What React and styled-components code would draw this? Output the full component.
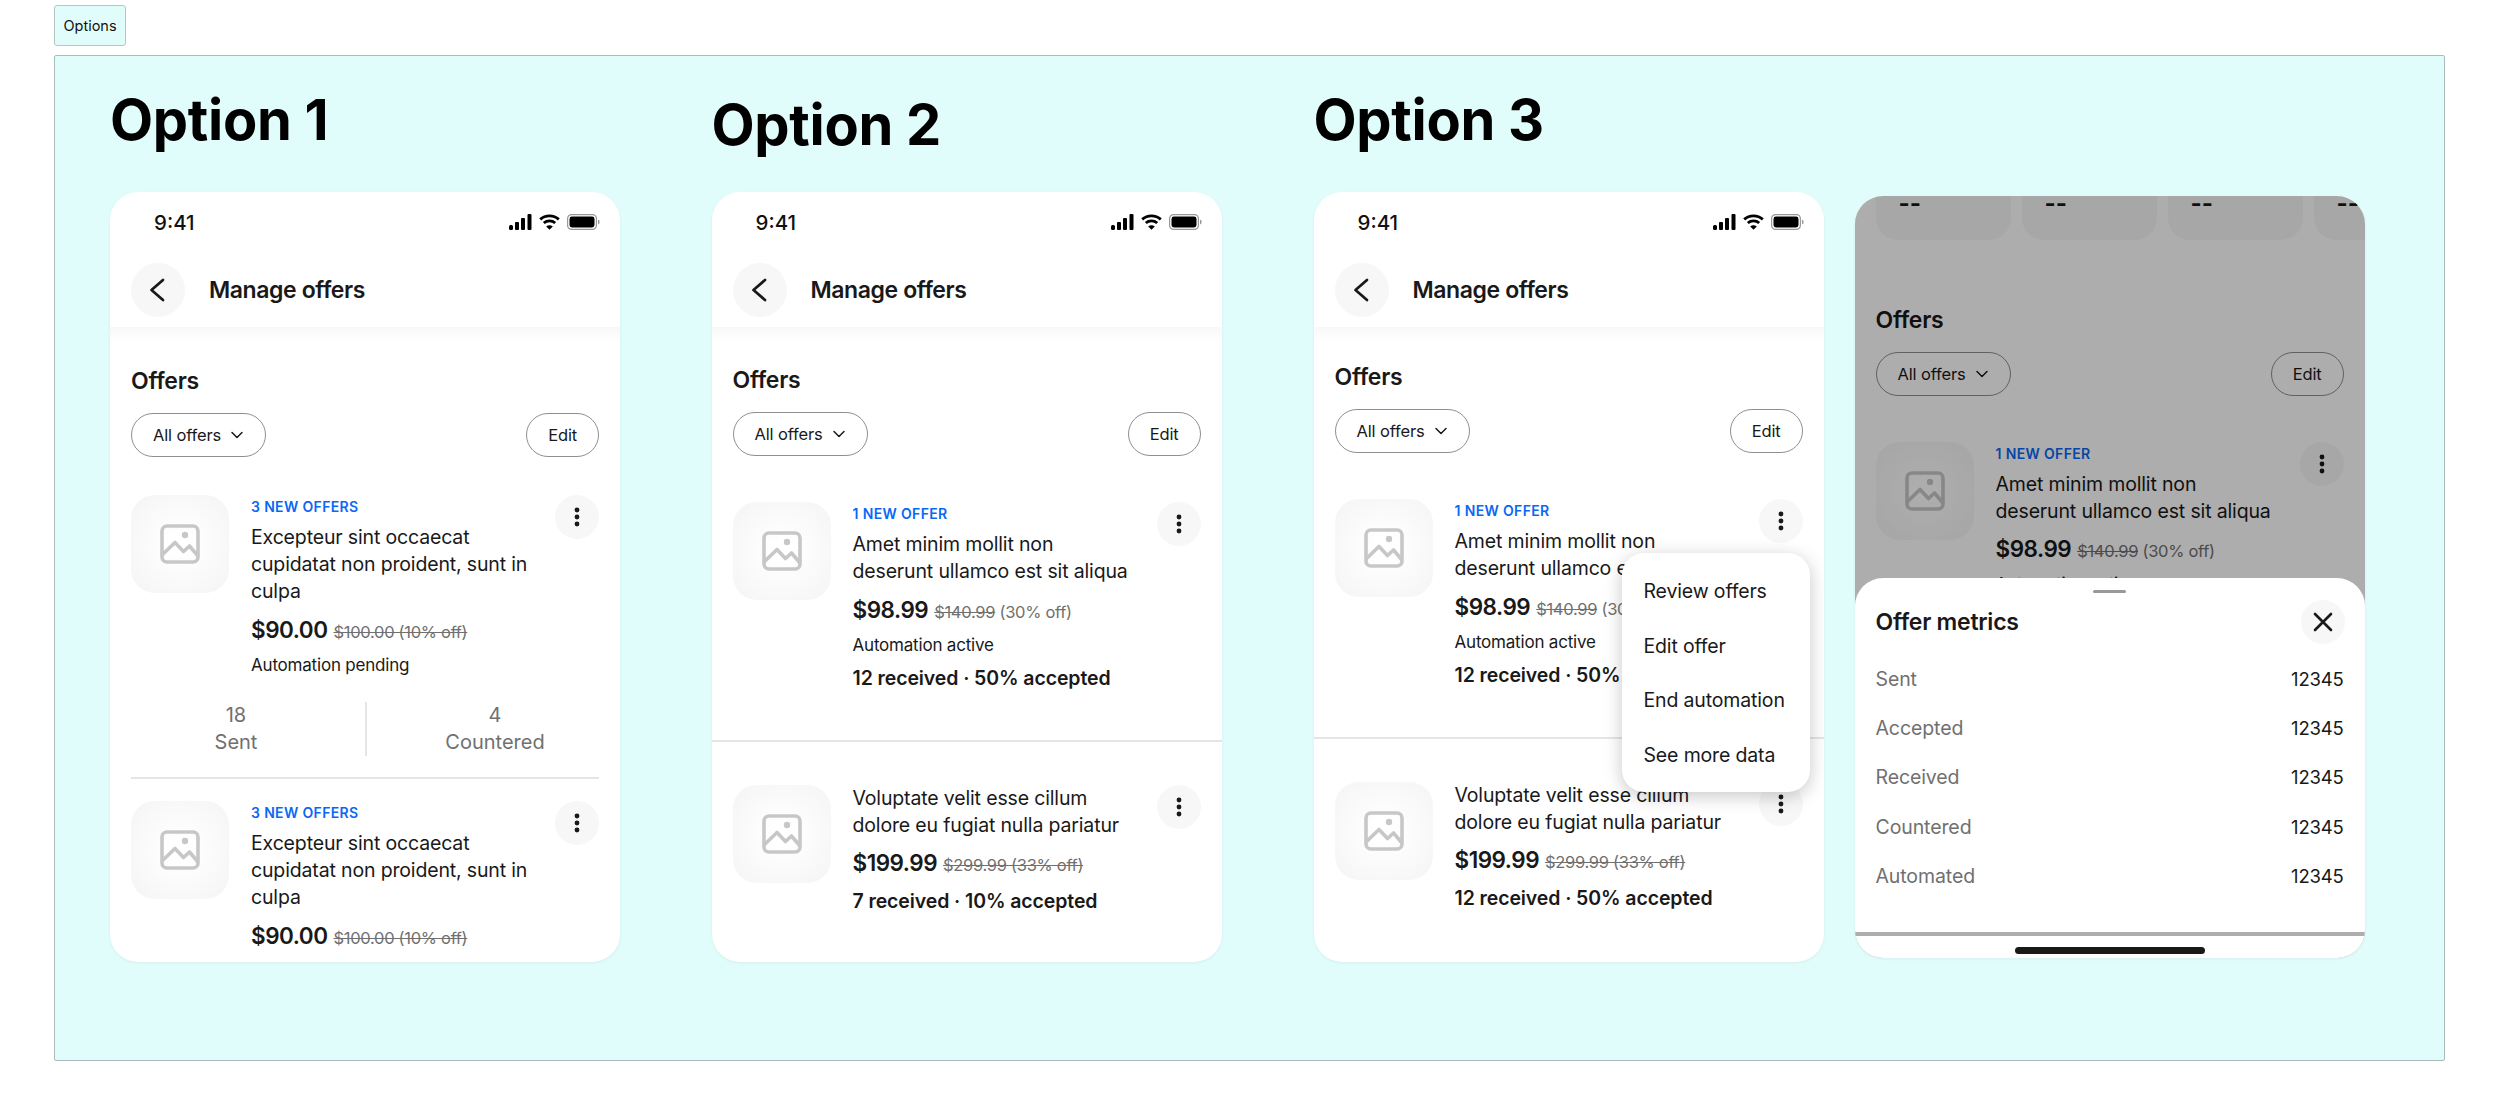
import React from 'react';
import styled, { createGlobalStyle } from 'styled-components';

const GlobalStyle = createGlobalStyle`
    html, body {
        margin: 0;
        padding: 0;
        background: #fff;
    }
    * {
        box-sizing: border-box;
    }
    body {
        font-family: Inter, 'Liberation Sans', sans-serif;
        color: #191919;
    }
`;

const Page = styled.div`
    width: 2500px;
    height: 1116px;
    padding: 5px 0 0 54px;
    overflow: hidden;
`;

const TabButton = styled.button`
    display: block;
    width: 72px;
    height: 41px;
    padding: 0;
    background: #e1fdfb;
    border: 1.5px solid #b4c6c6;
    border-radius: 3px;
    font-family: Inter, sans-serif;
    font-size: 14.5px;
    color: #111;
`;

const Panel = styled.div`
    display: flex;
    width: 2391px;
    height: 1006px;
    margin-top: 9px;
    padding-left: 55px;
    background: #e1fdfb;
    border: 1px solid #a9bcbc;
    border-radius: 2px;
`;

const Column = styled.div`
    display: flex;
    flex-direction: column;
    width: 510px;
    margin-right: ${p => p.$gap}px;
`;

const Heading = styled.h2`
    height: 136px;
    margin: 0;
    padding-top: ${p => p.$top}px;
    font-size: 56px;
    line-height: 66px;
    font-weight: 700;
    letter-spacing: -0.3px;
    color: #000;
`;

const SideColumn = styled.div`
    padding-top: 140px;
`;

const Phone = styled.div`
    position: relative;
    display: flex;
    flex-direction: column;
    width: 510px;
    height: ${p => p.$height}px;
    background: #fff;
    border-radius: 28px;
    overflow: hidden;
    box-shadow: 0 1px 3px rgba(0, 0, 0, 0.06);
`;

const StatusBar = styled.div`
    display: flex;
    flex: none;
    align-items: center;
    justify-content: space-between;
    height: 60px;
    padding: 0 20px 0 44px;
`;

const StatusTime = styled.span`
    font-size: 20.5px;
    font-weight: 500;
    color: #111;
`;

const NavBar = styled.div`
    display: flex;
    flex: none;
    align-items: center;
    gap: 24px;
    height: 75px;
    padding: 0 21px;
`;

const CircleButton = styled.div`
    display: flex;
    flex: none;
    align-items: center;
    justify-content: center;
    width: ${p => p.$size}px;
    height: ${p => p.$size}px;
    background: #f7f7f7;
    border-radius: 50%;
`;

const NavTitle = styled.div`
    font-size: 23px;
    font-weight: 600;
    letter-spacing: -0.4px;
    color: #191919;
`;

const NavShadow = styled.div`
    flex: none;
    height: 14px;
    background: linear-gradient(#f8f8f8, #fff);
`;

const Section = styled.div`
    flex: none;
    padding: ${p => p.$top}px 21px 0;
`;

const SectionTitle = styled.div`
    font-size: 23px;
    line-height: 28px;
    font-weight: 600;
    letter-spacing: -0.25px;
`;

const FilterRow = styled.div`
    display: flex;
    justify-content: space-between;
    margin-top: 18px;
`;

const Pill = styled.div`
    display: flex;
    align-items: center;
    gap: 9px;
    height: 44px;
    padding: 0 21px;
    border: 1.5px solid #8f8f8f;
    border-radius: 22px;
    font-size: 16.5px;
    letter-spacing: -0.15px;
`;

const StatCards = styled.div`
    display: flex;
    flex: none;
    gap: 11px;
    padding-left: 21px;
`;

const StatCard = styled.div`
    flex: none;
    width: 135px;
    height: 44px;
    padding-left: 23px;
    background: #f7f7f7;
    border-radius: 0 0 22px 22px;
    font-size: 24px;
    line-height: 16px;
    font-weight: 700;
`;

const OfferList = styled.div`
    flex: none;
    padding-top: ${p => p.$top}px;
`;

const OfferRow = styled.div`
    display: flex;
    gap: 22px;
    padding: 0 21px;
`;

const Thumb = styled.div`
    display: flex;
    flex: none;
    align-items: center;
    justify-content: center;
    width: 98px;
    height: 98px;
    border-radius: 24px;
    background: radial-gradient(circle, #fff 15%, #f6f6f6 85%);
`;

const OfferBody = styled.div`
    flex: 1;
    min-width: 0;
`;

const Badge = styled.div`
    height: 24px;
    margin-bottom: 5px;
    font-size: 14px;
    line-height: 24px;
    font-weight: 600;
    letter-spacing: 0.35px;
    color: #0968f6;
`;

const OfferTitle = styled.div`
    font-size: 19.5px;
    line-height: 27px;
    letter-spacing: -0.15px;
    white-space: nowrap;
`;

const PriceLine = styled.div`
    display: flex;
    align-items: baseline;
    gap: 6px;
    height: 34px;
    margin-top: 7.5px;
    line-height: 34px;
`;

const Price = styled.span`
    font-size: 22.5px;
    font-weight: 600;
    letter-spacing: -0.5px;
`;

const WasPrice = styled.span`
    font-size: 16.5px;
    letter-spacing: -0.3px;
    color: #707070;
`;

const Struck = styled.s`
    color: #707070;
`;

const AutoStatus = styled.div`
    margin-top: 6px;
    font-size: 17px;
    line-height: 24px;
    letter-spacing: -0.2px;
`;

const Summary = styled.div`
    margin-top: 7px;
    font-size: 19.5px;
    line-height: 28px;
    font-weight: 600;
    letter-spacing: -0.1px;
`;

const Stats = styled.div`
    display: flex;
    margin: 25.5px 21px 0;
`;

const Stat = styled.div`
    flex: none;
    width: 234px;
    padding-right: 24px;
    font-size: 20px;
    line-height: 27px;
    text-align: center;
    color: #707070;
    & + & {
        padding: 0 0 0 24px;
        border-left: 2px solid #e5e5e5;
    }
`;

const InsetRule = styled.div`
    height: 2px;
    margin: 21px 21px 22px;
    background: #e5e5e5;
`;

const FullRule = styled.div`
    height: 2px;
    margin: 48px 0 43px;
    background: #e5e5e5;
`;

const Menu = styled.div`
    position: absolute;
    top: 361px;
    left: 308px;
    width: 188px;
    height: 239px;
    padding: 11px 0 0 22px;
    background: #fff;
    border-radius: 22px;
    box-shadow: 0 4px 18px rgba(0, 0, 0, 0.22);
`;

const MenuItem = styled.div`
    height: 54.5px;
    font-size: 19.5px;
    line-height: 54px;
    letter-spacing: -0.15px;
    white-space: nowrap;
`;

const Overlay = styled.div`
    position: absolute;
    inset: 0;
    background: rgba(0, 0, 0, 0.32);
`;

const Sheet = styled.div`
    position: absolute;
    left: 0;
    right: 0;
    bottom: 0;
    height: 380px;
    background: #fff;
    border-radius: 28px 28px 0 0;
`;

const SheetHandle = styled.div`
    width: 33px;
    height: 3px;
    margin: 12px auto 0;
    background: #999;
    border-radius: 2px;
`;

const SheetHeader = styled.div`
    display: flex;
    align-items: center;
    justify-content: space-between;
    height: 44px;
    margin-top: 7px;
    padding: 0 20px 0 21px;
`;

const MetricList = styled.div`
    margin-top: 10.5px;
    padding: 0 21px;
`;

const MetricRow = styled.div`
    display: flex;
    align-items: center;
    justify-content: space-between;
    height: 49.2px;
    font-size: 18.5px;
    letter-spacing: -0.2px;
`;

const MetricLabel = styled.span`
    font-size: 19.5px;
    letter-spacing: -0.1px;
    color: #707070;
`;

const SheetBar = styled.div`
    height: 4px;
    margin-top: 31.5px;
    background: #adadad;
`;

const HomeIndicator = styled.div`
    width: 190px;
    height: 7px;
    margin: 11px auto 0;
    background: #191919;
    border-radius: 4px;
`;

const StatusIcons = styled.div`
    display: flex;
    align-items: center;
    gap: 7px;
`;

const SignalIcon = () => (
    <svg width="23" height="16" viewBox="0 0 23 16" fill="#000">
        <rect x="0" y="11" width="4" height="5" rx="1.5" />
        <rect x="6" y="8" width="4" height="8" rx="1" />
        <rect x="12" y="4" width="4" height="12" rx="1" />
        <rect x="18.5" y="0" width="4" height="16" rx="1" />
    </svg>
);

const WifiIcon = () => (
    <svg width="21" height="16" viewBox="0 0 21 16" fill="none" stroke="#000" strokeWidth="2.8">
        <path d="M1.2 5.4 C6.4 0.6 14.6 0.6 19.8 5.4" />
        <path d="M4.8 9 C8 6.2 13 6.2 16.2 9" />
        <path d="M10.5 15.8 L7.2 12.4 C9.2 11 11.8 11 13.8 12.4 Z" fill="#000" stroke="none" />
    </svg>
);

const BatteryIcon = () => (
    <svg width="33" height="16" viewBox="0 0 33 16">
        <rect x="0.6" y="0.6" width="28.8" height="14.8" rx="4" fill="none" stroke="#999" strokeWidth="1.2" />
        <rect x="2.5" y="2.5" width="25" height="11" rx="2.4" fill="#000" />
        <path d="M31 5.5 C32.2 6 32.6 7 32.6 8 C32.6 9 32.2 10 31 10.5 Z" fill="#999" />
    </svg>
);

const BackIcon = () => (
    <svg width="24" height="26" viewBox="0 0 24 26" fill="none" stroke="#191919" strokeWidth="2.7" strokeLinecap="round" strokeLinejoin="round">
        <path d="M17 3 L5.5 13 L17 23" />
    </svg>
);

const ChevronDown = () => (
    <svg width="14" height="8" viewBox="0 0 14 8" fill="none" stroke="#191919" strokeWidth="1.5" strokeLinecap="round" strokeLinejoin="round">
        <path d="M2 1.5 L7 6.5 L12 1.5" />
    </svg>
);

const KebabIcon = () => (
    <svg width="6" height="20" viewBox="0 0 6 20" fill="#191919">
        <circle cx="3" cy="3" r="2.4" />
        <circle cx="3" cy="10" r="2.4" />
        <circle cx="3" cy="17" r="2.4" />
    </svg>
);

const CloseIcon = () => (
    <svg width="20" height="20" viewBox="0 0 20 20" fill="none" stroke="#191919" strokeWidth="2.6" strokeLinecap="round">
        <path d="M2 2 L18 18 M18 2 L2 18" />
    </svg>
);

const ImageIcon = () => (
    <svg width="40" height="40" viewBox="0 0 40 40" fill="none" stroke="#c7c7c7" strokeWidth="3.6" strokeLinejoin="round">
        <rect x="2" y="2" width="36" height="36" rx="5" />
        <path d="M2 31 L15 18.5 L23.5 27.5 L29.5 22 L38 32" />
        <circle cx="25" cy="11" r="3.2" fill="#c7c7c7" stroke="none" />
    </svg>
);

const Offer = ({ badge, lines, price, was, wasNote, auto, summary }) => (
    <OfferRow>
        <Thumb>
            <ImageIcon />
        </Thumb>
        <OfferBody>
            {badge && <Badge>{badge}</Badge>}
            <OfferTitle>
                {lines.map(line => (
                    <div key={line}>{line}</div>
                ))}
            </OfferTitle>
            <PriceLine>
                <Price>{price}</Price>
                <WasPrice>
                    <Struck>{was}</Struck>
                    {wasNote}
                </WasPrice>
            </PriceLine>
            {auto && <AutoStatus>{auto}</AutoStatus>}
            {summary && <Summary>{summary}</Summary>}
        </OfferBody>
        <CircleButton $size={44}>
            <KebabIcon />
        </CircleButton>
    </OfferRow>
);

const PhoneTop = () => (
    <>
        <StatusBar>
            <StatusTime>9:41</StatusTime>
            <StatusIcons>
                <SignalIcon />
                <WifiIcon />
                <BatteryIcon />
            </StatusIcons>
        </StatusBar>
        <NavBar>
            <CircleButton $size={54}>
                <BackIcon />
            </CircleButton>
            <NavTitle>Manage offers</NavTitle>
        </NavBar>
        <NavShadow />
    </>
);

const Filters = ({ top }) => (
    <Section $top={top}>
        <SectionTitle>Offers</SectionTitle>
        <FilterRow>
            <Pill>
                All offers
                <ChevronDown />
            </Pill>
            <Pill>Edit</Pill>
        </FilterRow>
    </Section>
);

const offerA = {
    badge: '3 NEW OFFERS',
    lines: ['Excepteur sint occaecat', 'cupidatat non proident, sunt in', 'culpa'],
    price: '$90.00',
    was: '$100.00 (10% off)',
};

const offerB = {
    badge: '1 NEW OFFER',
    lines: ['Amet minim mollit non', 'deserunt ullamco est sit aliqua'],
    price: '$98.99',
    was: '$140.99',
    wasNote: ' (30% off)',
    auto: 'Automation active',
    summary: '12 received · 50% accepted',
};

const offerC = {
    lines: ['Voluptate velit esse cillum', 'dolore eu fugiat nulla pariatur'],
    price: '$199.99',
    was: '$299.99 (33% off)',
};

const menuItems = ['Review offers', 'Edit offer', 'End automation', 'See more data'];
const metrics = ['Sent', 'Accepted', 'Received', 'Countered', 'Automated'];

const App = () => (
    <Page>
        <GlobalStyle />
        <TabButton>Options</TabButton>
        <Panel>
            <Column $gap={91.5}>
                <Heading $top={31}>Option 1</Heading>
                <Phone $height={770}>
                    <PhoneTop />
                    <Filters top={26} />
                    <OfferList $top={38}>
                        <Offer {...offerA} auto="Automation pending" />
                        <Stats>
                            <Stat>
                                18
                                <br />
                                Sent
                            </Stat>
                            <Stat>
                                4
                                <br />
                                Countered
                            </Stat>
                        </Stats>
                        <InsetRule />
                        <Offer {...offerA} />
                    </OfferList>
                </Phone>
            </Column>
            <Column $gap={92}>
                <Heading $top={36}>Option 2</Heading>
                <Phone $height={770}>
                    <PhoneTop />
                    <Filters top={25} />
                    <OfferList $top={46}>
                        <Offer {...offerB} />
                        <FullRule />
                        <Offer {...offerC} summary="7 received · 10% accepted" />
                    </OfferList>
                </Phone>
            </Column>
            <Column $gap={31}>
                <Heading $top={31}>Option 3</Heading>
                <Phone $height={770}>
                    <PhoneTop />
                    <Filters top={22} />
                    <OfferList $top={46}>
                        <Offer {...offerB} />
                        <FullRule />
                        <Offer {...offerC} summary="12 received · 50% accepted" />
                    </OfferList>
                    <Menu>
                        {menuItems.map(item => (
                            <MenuItem key={item}>{item}</MenuItem>
                        ))}
                    </Menu>
                </Phone>
            </Column>
            <SideColumn>
                <Phone $height={762}>
                    <StatCards>
                        {[0, 1, 2, 3].map(i => (
                            <StatCard key={i}>--</StatCard>
                        ))}
                    </StatCards>
                    <Filters top={65.5} />
                    <OfferList $top={46}>
                        <Offer {...offerB} summary={null} />
                    </OfferList>
                    <Overlay />
                    <Sheet>
                        <SheetHandle />
                        <SheetHeader>
                            <SectionTitle>Offer metrics</SectionTitle>
                            <CircleButton $size={44}>
                                <CloseIcon />
                            </CircleButton>
                        </SheetHeader>
                        <MetricList>
                            {metrics.map(metric => (
                                <MetricRow key={metric}>
                                    <MetricLabel>{metric}</MetricLabel>
                                    <span>12345</span>
                                </MetricRow>
                            ))}
                        </MetricList>
                        <SheetBar />
                        <HomeIndicator />
                    </Sheet>
                </Phone>
            </SideColumn>
        </Panel>
    </Page>
);

export default App;
